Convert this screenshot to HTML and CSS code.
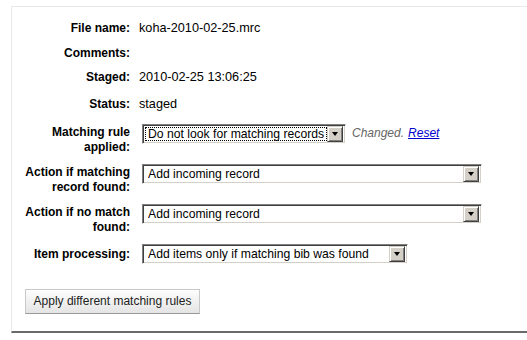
FILE: index.html
```html
<!DOCTYPE html>
<html>
<head>
<meta charset="utf-8">
<link rel="stylesheet" href="styles.css">
</head>
<body>
<div class="rows">
  <ol class="fields">
    <li class="row row-text gap-a"><span class="label">File name:</span><span class="value">koha-2010-02-25.mrc</span></li>
    <li class="row row-text gap-b"><span class="label">Comments:</span><span class="value"></span></li>
    <li class="row row-text gap-c"><span class="label">Staged:</span><span class="value">2010-02-25 13:06:25</span></li>
    <li class="row row-text gap-d"><span class="label">Status:</span><span class="value">staged</span></li>
    <li class="row row-select gap-e">
      <span class="label">Matching rule applied:</span>
      <span class="control">
        <span class="select w1 focused"><span class="sel-text"><span class="focus-ring">Do not look for matching records</span></span><span class="sel-btn"><span class="tri"></span></span></span>
        <span class="note">Changed.</span> <a class="reset" href="#">Reset</a>
      </span>
    </li>
    <li class="row row-select gap-e">
      <span class="label">Action if matching record found:</span>
      <span class="control"><span class="select w2"><span class="sel-text">Add incoming record</span><span class="sel-btn"><span class="tri"></span></span></span></span>
    </li>
    <li class="row row-select gap-e">
      <span class="label">Action if no match found:</span>
      <span class="control"><span class="select w2"><span class="sel-text">Add incoming record</span><span class="sel-btn"><span class="tri"></span></span></span></span>
    </li>
    <li class="row row-select row-single gap-f">
      <span class="label">Item processing:</span>
      <span class="control"><span class="select w3"><span class="sel-text">Add items only if matching bib was found</span><span class="sel-btn"><span class="tri"></span></span></span></span>
    </li>
  </ol>
  <div class="actions"><button class="btn" type="button">Apply different matching rules</button></div>
</div>
</body>
</html>
```
FILE: styles.css
```css
html, body {
  margin: 0;
  padding: 0;
  background: #fff;
  overflow: hidden;
}
body {
  font-family: "Liberation Sans", Arial, sans-serif;
  font-size: 12px;
  color: #000;
}
.rows {
  margin: 6px 0 0 11px;
  width: 515px;
  border: 1px solid #e8e8e8;
  border-right: none;
  border-bottom: 2px solid #6a6a6a;
  padding: 14px 0 17px 0;
}
.fields {
  list-style: none;
  margin: 0;
  padding: 0;
  display: flex;
  flex-direction: column;
}
.row {
  display: flex;
  align-items: flex-start;
  line-height: 15px;
}
.label {
  width: 118px;
  flex: none;
  text-align: right;
  font-weight: bold;
  font-size: 12px;
  line-height: 15px;
}
.value {
  margin-left: 9px;
  font-size: 12.7px;
}
.gap-a { margin-bottom: 10px; }
.gap-b { margin-bottom: 9px; }
.gap-c { margin-bottom: 12px; }
.gap-d { margin-bottom: 11.6px; }
.gap-e { margin-bottom: 9px; }
.gap-f { margin-bottom: 25px; }
.row-select .label {
  padding-top: 1px;
}
.row-select.row-single .label {
  padding-top: 3px;
}
.control {
  margin-left: 12px;
  display: flex;
  align-items: center;
}
.select {
  display: inline-flex;
  align-items: center;
  box-sizing: border-box;
  height: 20px;
  border: 1px solid;
  border-color: #808080 #fff #fff #808080;
  box-shadow: inset 1px 1px 0 #404040, inset -1px -1px 0 #d4d0c8;
  background: #fff;
  padding: 2px;
}
.w1 { width: 204px; }
.w2 { width: 340px; }
.w3 { width: 266px; }
.sel-text {
  flex: 1;
  font-size: 12.2px;
  line-height: 14px;
  padding-left: 3px;
  white-space: nowrap;
  overflow: hidden;
}
.focused .sel-text {
  padding-left: 0;
}
.focus-ring {
  display: block;
  border: 1px dotted #000;
  padding: 0 2px;
  line-height: 12px;
}
.sel-btn {
  flex: none;
  width: 16px;
  height: 16px;
  box-sizing: border-box;
  background: #d4d0c8;
  border: 1px solid;
  border-color: #d4d0c8 #404040 #404040 #d4d0c8;
  box-shadow: inset 1px 1px 0 #fff, inset -1px -1px 0 #808080;
  display: flex;
  align-items: center;
  justify-content: center;
}
.tri {
  width: 0;
  height: 0;
  border-left: 3.5px solid transparent;
  border-right: 3.5px solid transparent;
  border-top: 4px solid #000;
  margin-top: 1px;
}
.note {
  margin-left: 6px;
  font-style: italic;
  color: #666;
  font-size: 12px;
}
.reset {
  margin-left: 4px;
  color: #0000cc;
  font-style: italic;
  text-decoration: underline;
  font-size: 12px;
}
.actions {
  padding-left: 13px;
}
.btn {
  font-family: "Liberation Sans", Arial, sans-serif;
  font-size: 12px;
  height: 25px;
  width: 175px;
  padding: 0;
  color: #222;
  border: 1px solid #c8c8c8;
  border-bottom-color: #999;
  background: linear-gradient(#fdfdfd, #e4e4e4);
  border-radius: 0;
}
```
